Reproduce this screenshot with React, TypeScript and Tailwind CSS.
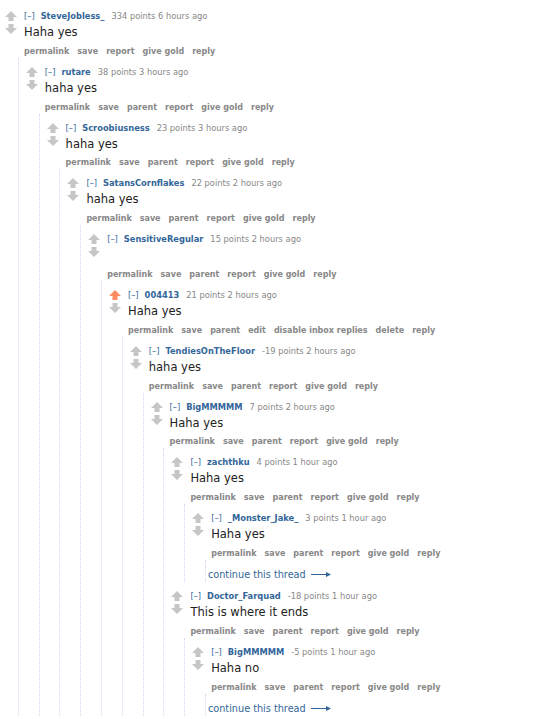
import { FC } from "react";

interface CommentData {
  author: string;
  points: string;
  time: string;
  body: string;
  top?: boolean;
  own?: boolean;
  more?: boolean;
  children?: CommentData[];
}

const thread: CommentData = {
  author: "SteveJobless_",
  points: "334 points",
  time: "6 hours ago",
  body: "Haha yes",
  top: true,
  children: [
    {
      author: "rutare",
      points: "38 points",
      time: "3 hours ago",
      body: "haha yes",
      children: [
        {
          author: "Scroobiusness",
          points: "23 points",
          time: "3 hours ago",
          body: "haha yes",
          children: [
            {
              author: "SatansCornflakes",
              points: "22 points",
              time: "2 hours ago",
              body: "haha yes",
              children: [
                {
                  author: "SensitiveRegular",
                  points: "15 points",
                  time: "2 hours ago",
                  body: "",
                  children: [
                    {
                      author: "004413",
                      points: "21 points",
                      time: "2 hours ago",
                      body: "Haha yes",
                      own: true,
                      children: [
                        {
                          author: "TendiesOnTheFloor",
                          points: "-19 points",
                          time: "2 hours ago",
                          body: "haha yes",
                          children: [
                            {
                              author: "BigMMMMM",
                              points: "7 points",
                              time: "2 hours ago",
                              body: "Haha yes",
                              children: [
                                {
                                  author: "zachthku",
                                  points: "4 points",
                                  time: "1 hour ago",
                                  body: "Haha yes",
                                  children: [
                                    {
                                      author: "_Monster_Jake_",
                                      points: "3 points",
                                      time: "1 hour ago",
                                      body: "Haha yes",
                                      more: true,
                                    },
                                  ],
                                },
                                {
                                  author: "Doctor_Farquad",
                                  points: "-18 points",
                                  time: "1 hour ago",
                                  body: "This is where it ends",
                                  children: [
                                    {
                                      author: "BigMMMMM",
                                      points: "-5 points",
                                      time: "1 hour ago",
                                      body: "Haha no",
                                      more: true,
                                    },
                                  ],
                                },
                              ],
                            },
                          ],
                        },
                      ],
                    },
                  ],
                },
              ],
            },
          ],
        },
      ],
    },
  ],
};

const Arrow: FC<{ down?: boolean; color: string }> = ({ down, color }) => (
  <svg
    width="12"
    height="10"
    viewBox="0 0 12 10"
    className={down ? "rotate-180" : ""}
  >
    <polygon
      points="6,0 12,6 8.5,6 8.5,10 3.5,10 3.5,6 0,6"
      fill={color}
    />
  </svg>
);

const Comment: FC<{ c: CommentData }> = ({ c }) => {
  const buttons = c.own
    ? ["permalink", "save", "parent", "edit", "disable inbox replies", "delete", "reply"]
    : c.top
      ? ["permalink", "save", "report", "give gold", "reply"]
      : ["permalink", "save", "parent", "report", "give gold", "reply"];

  return (
    <div>
      <div className="flex">
        <div className="w-[24px] pl-[5px] pt-[9px] flex flex-col gap-[3px]">
          <Arrow color={c.own ? "#ff8b60" : "#c6c6c6"} />
          <Arrow down color="#c6c6c6" />
        </div>
        <div className="flex-1 pt-[8px]">
          <div className="h-[12px] flex items-center text-[8.3px] leading-[12px] whitespace-nowrap">
            <span className="text-[#369] mr-[6px]">[–]</span>
            <span className="text-[#369] font-bold mr-[7px]">{c.author}</span>
            <span className="text-[#888]">
              {c.points} {c.time}
            </span>
          </div>
          <div className="mt-[2px] h-[17.8px] text-[11.5px] leading-[17.8px] text-[#222]">
            {c.body}
          </div>
          <ul className="mt-[4px] h-[12px] flex gap-[8px] text-[8px] leading-[12px] font-bold text-[#888] whitespace-nowrap">
            {buttons.map((b) => (
              <li key={b}>{b}</li>
            ))}
          </ul>
        </div>
      </div>
      {(c.children || c.more) && (
        <div className="ml-[17.8px] border-l border-dotted border-[#d4d4f7] pl-[2px]">
          {c.children?.map((ch, i) => (
            <Comment key={i} c={ch} />
          ))}
          {c.more && (
            <div className="pt-[7px] h-[22px] flex items-start gap-[5px] text-[9.7px] leading-[15px] text-[#369]">
              <span>continue this thread</span>
              <svg width="20" height="15" viewBox="0 0 20 15">
                <line x1="0" y1="7.5" x2="17" y2="7.5" stroke="#369" strokeWidth="1" />
                <polygon points="15,5 20,7.5 15,10" fill="#369" />
              </svg>
            </div>
          )}
        </div>
      )}
    </div>
  );
};

const App: FC = () => {
  return (
    <div className="bg-white min-h-screen pt-[2px] font-['DejaVu_Sans',Verdana,sans-serif]">
      <Comment c={thread} />
    </div>
  );
};

export default App;
